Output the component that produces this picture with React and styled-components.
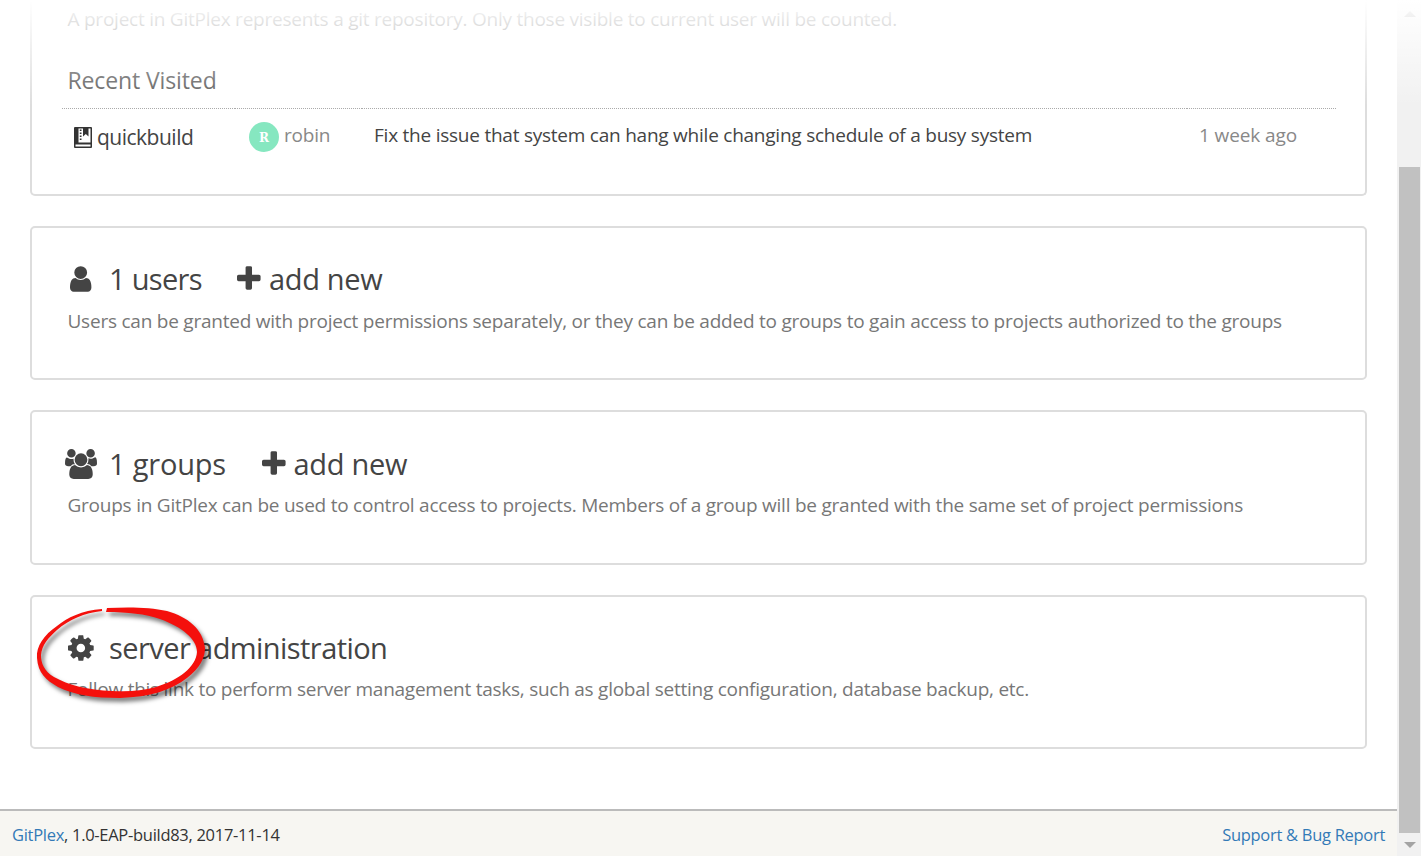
import React from "react";
import styled, { createGlobalStyle } from "styled-components";

const GlobalStyle = createGlobalStyle`
  *, *::before, *::after { box-sizing: border-box; }
  body {
    margin: 0;
    background: #fff;
    color: #444;
    font-family: "Open Sans", "Noto Sans", sans-serif;
    overflow: hidden;
  }
`;

const Window = styled.div`
  position: relative;
  display: grid;
  grid-template-columns: 1fr 24px;
  height: 856px;
  overflow: hidden;
`;

const Page = styled.div`
  display: flex;
  flex-direction: column;
  min-width: 0;
`;

const Main = styled.main`
  flex: 1;
  display: flex;
  flex-direction: column;
  gap: 30px;
  padding: 0 30px;
`;

const Card = styled.section`
  position: relative;
  height: 154.4px;
  padding: 31.2px 35.5px 0;
  border: 2px solid #ddd;
  border-radius: 5px;
  background: #fff;
`;

const ProjectsCard = styled(Card)`
  height: 196px;
  padding: 6px 30px 0;
  border-top: 0;
  border-top-left-radius: 0;
  border-top-right-radius: 0;
`;

const Heading = styled.h2`
  display: flex;
  margin: 0;
  font-size: 29px;
  font-weight: 400;
  line-height: 40px;
  white-space: nowrap;
`;

const Label = styled.a`
  letter-spacing: ${(p) => p.$tracking || 0}px;
  color: #444;
`;

const IconSlot = styled.span`
  display: flex;
  justify-content: center;
  width: 32px;
  margin: 0 12px 0 -2.5px;
`;

const AddLink = styled.span`
  display: flex;
  gap: 8px;
  margin-left: ${(p) => p.$indent}px;
`;

const Glyph = styled.svg`
  display: block;
  flex: none;
  height: 30px;
  margin-top: 5px;
  fill: #444;
`;

const Description = styled.p`
  margin: ${(p) => (p.$flush ? "0 5.5px" : "8.5px 0 0")};
  font-size: 19px;
  line-height: 27px;
  letter-spacing: ${(p) => p.$tracking}px;
  white-space: nowrap;
  color: #777;
`;

const Subheading = styled.h3`
  margin: 31px 5.5px 12px;
  font-size: 23px;
  font-weight: 400;
  line-height: 32px;
  letter-spacing: -0.12px;
  color: #555;
`;

const VisitRow = styled.div`
  display: grid;
  grid-template-columns: 173px 127px 825px 149px;
  width: 1274px;
`;

const Cell = styled.div`
  display: flex;
  padding: 13px 0 0 12px;
  border-top: 1px dotted #aaa;
  font-size: 19px;
  line-height: 27px;
  letter-spacing: ${(p) => p.$tracking || 0}px;
  white-space: nowrap;
  color: ${(p) => (p.$muted ? "#888" : "#444")};
`;

const ProjectName = styled.span`
  margin-left: 5.5px;
  font-size: 21px;
  line-height: 30px;
  letter-spacing: -0.5px;
`;

const BookIcon = styled.svg`
  width: 18px;
  height: 21px;
  margin: 5px 0 0 -0.5px;
`;

const Avatar = styled.span`
  width: 30px;
  height: 30px;
  margin: 0 5px 0 2px;
  border-radius: 50%;
  background: #86e7c0;
  color: #fff;
  font: bold 12px/33px "DejaVu Serif", serif;
  text-align: center;
`;

const Footer = styled.footer`
  display: flex;
  justify-content: space-between;
  height: 47px;
  padding: 0 12px;
  border-top: 2px solid #bbb;
  background: #f7f6f2;
  color: #333;
  font-size: 16.5px;
  line-height: 47px;
  letter-spacing: -0.29px;
`;

const FooterLink = styled.a`
  color: #337ab7;
`;

const Scrollbar = styled.div`
  display: flex;
  flex-direction: column;
  justify-content: space-between;
  align-items: center;
  padding: 11px 1px 8px 2px;
  background: #f1f1f1;
`;

const Thumb = styled.div`
  width: 21px;
  height: 666px;
  margin-top: 140px;
  background: #c1c1c1;
`;

const Arrow = styled.svg`
  width: 12px;
  height: 6px;
  fill: #a3a3a3;
`;

const TopFade = styled.div`
  position: absolute;
  inset: 0 0 auto 0;
  height: 106px;
  background: linear-gradient(#fff, rgba(255, 255, 255, 0));
  pointer-events: none;
`;

const Marker = styled.svg`
  position: absolute;
  left: 0;
  top: 0;
  width: 190px;
  height: 120px;
  overflow: visible;
  pointer-events: none;
  filter: drop-shadow(3px 4px 2px rgba(0, 0, 0, 0.5));
`;

const UserIcon = () => (
  <Glyph width="21.4" viewBox="256 0 1280 1792">
    <path d="M1536 1399q0 109-62.5 187t-150.5 78h-854q-88 0-150.5-78t-62.5-187q0-85 8.5-160.5t31.5-152 58.5-131 94-89 134.5-34.5q131 128 313 128t313-128q76 0 134.5 34.5t94 89 58.5 131 31.5 152 8.5 160.5zm-256-887q0 159-112.500 271.500t-271.500 112.500-271.500-112.500-112.500-271.500 112.500-271.500 271.500-112.500 271.500 112.500 112.500 271.500z" />
  </Glyph>
);

const GroupIcon = () => (
  <Glyph width="32" viewBox="0 0 1920 1792">
    <path d="M593 896q-162 5-265 128h-134q-82 0-138-40.5t-56-118.5q0-353 124-353 6 0 43.5 21t97.5 42.5 119 21.5q67 0 133-23-5 37-5 66 0 159 81 273zM1664 1533q0 120-73 189.500t-194 69.500h-874q-121 0-194-69.500t-73-189.500q0-53 3.500-103.500t14-109 26.500-108.500 43-97.500 62-81 85.500-53.500 111.500-20q10 0 43 21.500t73 48 107 48 135 21.500 135-21.500 107-48 73-48 43-21.500q61 0 111.500 20t85.500 53.500 62 81 43 97.500 26.500 108.500 14 109 3.500 103.500zM640 256q0 106-75 181t-181 75-181-75-75-181 75-181 181-75 181 75 75 181zM1344 640q0 159-112.500 271.500t-271.500 112.500-271.500-112.500-112.500-271.500 112.500-271.500 271.500-112.500 271.500 112.500 112.500 271.500zM1920 865q0 78-56 118.500t-138 40.500h-134q-103-123-265-128 81-114 81-273 0-29-5-66 66 23 133 23 59 0 119-21.500t97.500-42.500 43.500-21q124 0 124 353zM1792 256q0 106-75 181t-181 75-181-75-75-181 75-181 181-75 181 75 75 181z" />
  </Glyph>
);

const CogIcon = () => (
  <Glyph width="25.7" viewBox="128 0 1536 1792">
    <path d="M1152 896q0-106-75-181t-181-75-181 75-75 181 75 181 181 75 181-75 75-181zm512-109v222q0 12-8 23t-20 13l-185 28q-19 54-39 91 35 50 107 138 10 12 10 25t-9 23q-27 37-99 108t-94 71q-12 0-26-9l-138-108q-44 23-91 38-16 136-29 186-7 28-36 28h-222q-14 0-24.500-8.500t-11.500-21.500l-28-184q-49-16-90-37l-141 107q-10 9-25 9-14 0-25-11-126-114-165-168-7-10-7-23 0-12 8-23 15-21 51-66.500t54-70.500q-27-50-41-99l-183-27q-13-2-21-12.500t-8-23.500v-222q0-12 8-23t19-13l186-28q14-46 39-92-40-57-107-138-10-12-10-24 0-10 9-23 26-36 98.500-107.500t94.500-71.500q13 0 26 10l138 107q44-23 91-38 16-136 29-186 7-28 36-28h222q14 0 24.500 8.500t11.500 21.500l28 184q49 16 90 37l142-107q9-9 24-9 13 0 25 10 129 119 165 170 7 8 7 22 0 12-8 23-15 21-51 66.500t-54 70.500q26 50 41 98l183 28q13 2 21 12.500t8 23.500z" />
  </Glyph>
);

const PlusIcon = () => (
  <Glyph width="23.6" viewBox="192 0 1408 1792">
    <path d="M1600 736v192q0 40-28 68t-68 28h-416v416q0 40-28 68t-68 28h-192q-40 0-68-28t-28-68v-416h-416q-40 0-68-28t-28-68v-192q0-40 28-68t68-28h416v-416q0-40 28-68t68-28h192q40 0 68 28t28 68v416h416q40 0 68 28t28 68z" />
  </Glyph>
);

const AddNew = ({ indent }) => (
  <AddLink $indent={indent}>
    <PlusIcon />
    <Label $tracking={-0.3}>add new</Label>
  </AddLink>
);

export default function App() {
  return (
    <Window>
      <GlobalStyle />
      <Page>
        <Main>
          <ProjectsCard>
            <Description $flush $tracking={-0.237}>
              A project in GitPlex represents a git repository. Only those visible to current user will be counted.
            </Description>
            <Subheading>Recent Visited</Subheading>
            <VisitRow>
              <Cell>
                <BookIcon viewBox="0 0 18 21">
                  <rect width="18" height="21" rx="1" fill="#333" />
                  <path d="M4.500 1.500H16.500V15.500H4.500zM1.500 17.500h15v2h-15z" fill="#fff" />
                  <path d="M9 0h5.500v9.500L11.800 7 9 9.500zM5.800 2.500h1.700V4H5.800zM5.800 5.500h1.700V7H5.800zM5.800 8.500h1.700V10H5.800zM5.800 11.500h1.700V13H5.800z" fill="#333" />
                </BookIcon>
                <ProjectName>quickbuild</ProjectName>
              </Cell>
              <Cell $muted $tracking={-0.2}>
                <Avatar>R</Avatar>
                robin
              </Cell>
              <Cell $tracking={-0.235}>Fix the issue that system can hang while changing schedule of a busy system</Cell>
              <Cell $muted $tracking={-0.1}>1 week ago</Cell>
            </VisitRow>
          </ProjectsCard>

          <Card>
            <Heading>
              <IconSlot><UserIcon /></IconSlot>
              <Label $tracking={-0.7}>1 users</Label>
              <AddNew indent={35.5} />
            </Heading>
            <Description $tracking={-0.228}>
              Users can be granted with project permissions separately, or they can be added to groups to gain access to projects authorized to the groups
            </Description>
          </Card>

          <Card>
            <Heading>
              <IconSlot><GroupIcon /></IconSlot>
              <Label $tracking={-0.2}>1 groups</Label>
              <AddNew indent={36} />
            </Heading>
            <Description $tracking={-0.235}>
              Groups in GitPlex can be used to control access to projects. Members of a group will be granted with the same set of project permissions
            </Description>
          </Card>

          <Card>
            <Heading>
              <IconSlot><CogIcon /></IconSlot>
              <Label $tracking={-0.57}>server administration</Label>
            </Heading>
            <Description $tracking={-0.255}>
              Follow this link to perform server management tasks, such as global setting configuration, database backup, etc.
            </Description>
            <Marker viewBox="32 597 190 120">
              <path
                fill="#f4100c"
                fillRule="evenodd"
                d="M102 609C82 610 67 618 57 626C44 635 36 646 37 658C38 673 46 680 58 687C74 695 94 698 120 698C150 697 172 690 187 678C200 668 205 658 205 648C203 629 188 617 167 611C150 607 128 607 107 608L106 612C128 612 145 614 160 619C182 627 197 639 197 652C196 667 179 680 156 687C141 691 128 692 112 691C88 690 68 685 54 677C44 671 41 663 41 655C42 645 48 638 57 630C70 619 84 613 102 611Z"
              />
            </Marker>
          </Card>
        </Main>
        <Footer>
          <span>
            <FooterLink>GitPlex</FooterLink>, 1.0-EAP-build83, 2017-11-14
          </span>
          <FooterLink>Support &amp; Bug Report</FooterLink>
        </Footer>
      </Page>
      <Scrollbar>
        <Arrow viewBox="0 0 12 6"><path d="M6 0l6 6H0z" /></Arrow>
        <Thumb />
        <Arrow viewBox="0 0 12 6"><path d="M0 0h12L6 6z" /></Arrow>
      </Scrollbar>
      <TopFade />
    </Window>
  );
}
